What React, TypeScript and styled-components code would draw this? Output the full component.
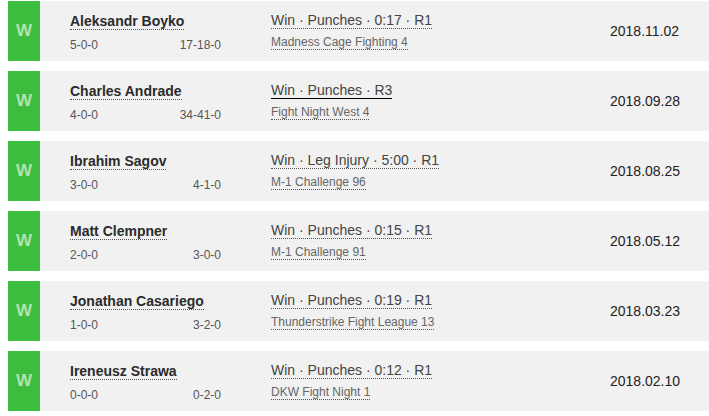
import React from 'react';
import styled, { createGlobalStyle } from 'styled-components';

const GlobalStyle = createGlobalStyle`
  body {
    margin: 0;
    background: #ffffff;
    font-family: "Liberation Sans", Arial, sans-serif;
  }
`;

const List = styled.div`
  display: flex;
  flex-direction: column;
  gap: 10px;
  padding: 1px 0 0 8px;
`;

const Row = styled.div`
  display: flex;
  height: 60px;
  background-color: #f1f1f1;
`;

const Badge = styled.div`
  width: 32px;
  flex-shrink: 0;
  display: flex;
  align-items: center;
  justify-content: center;
  background-color: #3dbd3d;
  color: rgba(255, 255, 255, 0.6);
  font-weight: bold;
  font-size: 17px;
`;

const Fighter = styled.div`
  width: 151px;
  margin-left: 30px;
  padding-top: 11px;
`;

const Name = styled.span`
  font-size: 14px;
  line-height: 16px;
  font-weight: bold;
  color: #2b2b2b;
  border-bottom: 1px dotted #555;
`;

const Records = styled.div`
  display: flex;
  justify-content: space-between;
  margin-top: 8px;
  font-size: 12px;
  line-height: 14px;
  color: #555;
`;

const Result = styled.div`
  flex: 1;
  margin-left: 50px;
  padding-top: 11px;
  display: flex;
  flex-direction: column;
  align-items: flex-start;
`;

const Method = styled.span<{ $active?: boolean }>`
  font-size: 14px;
  line-height: 16px;
  color: #444;
  border-bottom: 1px ${p => (p.$active ? 'solid #000' : 'dotted #555')};
`;

const Event = styled.span`
  margin-top: 6px;
  font-size: 12px;
  line-height: 14px;
  color: #666;
  border-bottom: 1px dotted #555;
`;

const DateCell = styled.div`
  width: 99px;
  display: flex;
  align-items: center;
  font-size: 14px;
  color: #222;
`;

type Fight = {
  name: string;
  record: string;
  oppRecord: string;
  method: string;
  event: string;
  date: string;
  active?: boolean;
};

const fights: Fight[] = [
  { name: 'Aleksandr Boyko', record: '5-0-0', oppRecord: '17-18-0', method: 'Win · Punches · 0:17 · R1', event: 'Madness Cage Fighting 4', date: '2018.11.02' },
  { name: 'Charles Andrade', record: '4-0-0', oppRecord: '34-41-0', method: 'Win · Punches · R3', event: 'Fight Night West 4', date: '2018.09.28', active: true },
  { name: 'Ibrahim Sagov', record: '3-0-0', oppRecord: '4-1-0', method: 'Win · Leg Injury · 5:00 · R1', event: 'M-1 Challenge 96', date: '2018.08.25' },
  { name: 'Matt Clempner', record: '2-0-0', oppRecord: '3-0-0', method: 'Win · Punches · 0:15 · R1', event: 'M-1 Challenge 91', date: '2018.05.12' },
  { name: 'Jonathan Casariego', record: '1-0-0', oppRecord: '3-2-0', method: 'Win · Punches · 0:19 · R1', event: 'Thunderstrike Fight League 13', date: '2018.03.23' },
  { name: 'Ireneusz Strawa', record: '0-0-0', oppRecord: '0-2-0', method: 'Win · Punches · 0:12 · R1', event: 'DKW Fight Night 1', date: '2018.02.10' },
];

const App = () => {
  return (
    <>
      <GlobalStyle />
      <List>
        {fights.map(f => (
          <Row key={f.date}>
            <Badge>W</Badge>
            <Fighter>
              <Name>{f.name}</Name>
              <Records>
                <span>{f.record}</span>
                <span>{f.oppRecord}</span>
              </Records>
            </Fighter>
            <Result>
              <Method $active={f.active}>{f.method}</Method>
              <Event>{f.event}</Event>
            </Result>
            <DateCell>{f.date}</DateCell>
          </Row>
        ))}
      </List>
    </>
  );
};

export default App;
